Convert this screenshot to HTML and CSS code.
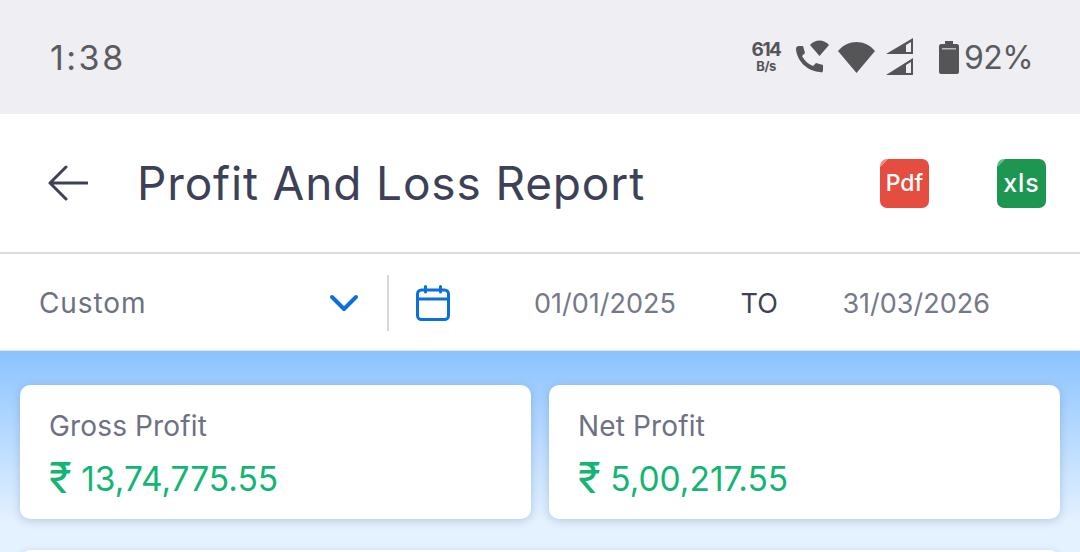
FILE: index.html
```html
<!DOCTYPE html>
<html lang="en">
<head>
    <meta charset="UTF-8">
    <meta name="viewport" content="width=device-width, initial-scale=1.0">
    <title>Profit And Loss Report</title>
    <link rel="stylesheet" href="styles.css">
</head>
<body>

<div class="status-bar">
    <div class="clock">1:38</div>
    <div class="status-icons">
        <div class="net-speed"><span class="net-num">614</span><span class="net-unit">B/s</span></div>
        <svg class="icon-call" width="36" height="34" viewBox="0 0 36 34">
            <path d="M1 9 C1 7 2 6 4 6 L8 6 L10 13 L7 16 C10 21 13 24 18 26 L21 23 L28 25 L28 30 C28 32 27 33 25 32 C12 31 2 21 1 9 Z" fill="#555558"/>
            <path d="M15 5 C20 -1 29 -1 34 5 L24.500 16 Z" fill="#555558"/>
        </svg>
        <svg class="icon-wifi" width="37" height="31" viewBox="0 0 37 31"><path d="M0 9 C10 -3 27 -3 37 9 L18.500 31 Z" fill="#555558"/></svg>
        <svg class="icon-signal" width="28" height="38" viewBox="0 0 28 38">
            <path d="M0 16 L27 0 L27 16 Z" fill="#555558"/>
            <path d="M20 7 L25 4 L25 14 L20 14 Z" fill="#eeeef3"/>
            <path d="M0 37 L27 20 L27 37 Z" fill="#555558"/>
            <path d="M20 27 L25 24 L25 35 L20 35 Z" fill="#eeeef3"/>
        </svg>
        <svg class="icon-battery" width="20" height="33" viewBox="0 0 20 33">
            <path d="M6 0 H14 V3 H18 C19 3 20 4 20 5 V31 C20 32 19 33 18 33 H2 C1 33 0 32 0 31 V5 C0 4 1 3 2 3 H6 Z" fill="#555558"/>
            <rect x="3" y="7" width="14" height="1.500" fill="#b9b9bd"/>
        </svg>
        <span class="battery-pct">92%</span>
    </div>
</div>

<div class="app-header">
    <svg class="back-icon" width="40" height="36" viewBox="0 0 40 36">
        <path d="M18 2 L2 18 L18 34 M2 18 H39" fill="none" stroke="#3d4157" stroke-width="3" stroke-linecap="round" stroke-linejoin="round"/>
    </svg>
    <div class="app-title">Profit And Loss Report</div>
    <div class="file-icon pdf">Pdf</div>
    <div class="file-icon xls">xls</div>
</div>

<div class="filter-bar">
    <div class="period-select">
        <span>Custom</span>
        <svg width="30" height="18" viewBox="0 0 30 18">
            <path d="M3 3 L15 15 L27 3" fill="none" stroke="#0b6fdc" stroke-width="4" stroke-linecap="round" stroke-linejoin="round"/>
        </svg>
    </div>
    <div class="filter-divider"></div>
    <svg class="calendar-icon" width="34" height="36" viewBox="0 0 34 36">
        <rect x="1.500" y="5" width="31" height="29.500" rx="4" fill="none" stroke="#0b6fdc" stroke-width="3"/>
        <path d="M1.500 14 H32.500 M9.500 1.500 V7 M24.500 1.500 V7" fill="none" stroke="#0b6fdc" stroke-width="3" stroke-linecap="round"/>
    </svg>
    <div class="date-range">
        <span class="date">01/01/2025</span>
        <span class="to">TO</span>
        <span class="date">31/03/2026</span>
    </div>
</div>

<div class="report-body">
    <div class="summary-grid">
        <div class="summary-card">
            <div class="summary-label">Gross Profit</div>
            <div class="summary-value"><span class="rupee">₹</span> 13,74,775.55</div>
        </div>
        <div class="summary-card">
            <div class="summary-label">Net Profit</div>
            <div class="summary-value"><span class="rupee">₹</span> 5,00,217.55</div>
        </div>
    </div>
    <div class="report-card"></div>
</div>

</body>
</html>
```

FILE: styles.css
```css
body {
    margin: 0;
    height: 552px;
    overflow: hidden;
    font-family: 'Inter', 'Noto Sans', sans-serif;
    background: #e6f2ff;
}

.status-bar {
    height: 114px;
    padding: 0 47px 0 50px;
    box-sizing: border-box;
    background: #eeeef3;
    display: flex;
    justify-content: space-between;
    align-items: center;
}
.clock {
    font-size: 34px;
    letter-spacing: 2.500px;
    color: #5b5b5f;
}
.status-icons {
    display: flex;
    align-items: center;
}
.net-speed {
    width: 32px;
    display: flex;
    flex-direction: column;
    align-items: center;
    gap: 3px;
    color: #555558;
    font-weight: 700;
}
.net-num {
    font-size: 19px;
    line-height: 15px;
    letter-spacing: -1.500px;
}
.net-unit {
    font-size: 13px;
    line-height: 12px;
    letter-spacing: -0.500px;
}
.icon-call {
    margin-left: 13px;
}
.icon-wifi {
    margin-left: 7px;
}
.icon-signal {
    margin-left: 11px;
}
.icon-battery {
    margin-left: 25px;
}
.battery-pct {
    margin-left: 5px;
    font-size: 32px;
    letter-spacing: -0.600px;
    color: #5b5b5f;
}

.app-header {
    height: 138px;
    padding: 0 34px 0 48px;
    background: #fff;
    border-bottom: 2px solid #dcdcdf;
    display: flex;
    align-items: center;
}
.back-icon {
    flex-shrink: 0;
}
.app-title {
    flex: 1;
    margin-left: 49px;
    font-size: 46px;
    color: #3d4157;
    letter-spacing: 0.850px;
}
.file-icon {
    width: 49px;
    height: 49px;
    border-radius: 7px;
    color: #fff;
    font-size: 25px;
    font-weight: 500;
    display: flex;
    align-items: center;
    justify-content: center;
}
.pdf {
    font-size: 23px;
    background: linear-gradient(135deg, #f08a7e 0, #f08a7e 9%, #e44d3f 9%);
}
.xls {
    margin-left: 68px;
    letter-spacing: 1px;
    background: linear-gradient(135deg, #5cc088 0, #5cc088 9%, #1d9651 9%);
}

.filter-bar {
    height: 96px;
    padding: 2px 0 0 39px;
    box-sizing: border-box;
    background: #fff;
    display: flex;
    align-items: center;
    color: #6d7183;
    font-size: 28px;
}
.period-select {
    width: 320px;
    letter-spacing: 0.900px;
    display: flex;
    justify-content: space-between;
    align-items: center;
}
.filter-divider {
    width: 2px;
    height: 56px;
    margin-left: 28px;
    background: #d8d8da;
}
.calendar-icon {
    margin-left: 27px;
}
.date-range {
    flex: 1;
    padding: 0 90px 0 84px;
    font-size: 27px;
    display: flex;
    justify-content: space-between;
    align-items: center;
}
.date {
    color: #757989;
}
.to {
    color: #3d4157;
}

.report-body {
    height: 202px;
    padding: 34px 20px 0;
    box-sizing: border-box;
    overflow: hidden;
    border-top: 1px solid #d8e4f0;
    background: linear-gradient(#8bc3ff, #e4f1ff 85%);
}
.summary-grid {
    display: grid;
    grid-template-columns: 1fr 1fr;
    gap: 18px;
}
.summary-card {
    height: 134px;
    padding: 24px 29px 0;
    box-sizing: border-box;
    background: #fff;
    border-radius: 10px;
    box-shadow: 0 2px 8px rgba(60, 90, 130, 0.25);
}
.summary-label {
    font-size: 28px;
    letter-spacing: 0.150px;
    color: #6d7183;
}
.summary-value {
    margin-top: 14px;
    font-size: 33.500px;
    line-height: 41px;
    color: #13b573;
}
.rupee {
    font-size: 42px;
    line-height: 1;
    vertical-align: -2px;
}
.report-card {
    height: 40px;
    margin-top: 31px;
    background: #fff;
    border-radius: 10px;
    box-shadow: 0 1px 6px rgba(60, 90, 130, 0.2);
}
```
